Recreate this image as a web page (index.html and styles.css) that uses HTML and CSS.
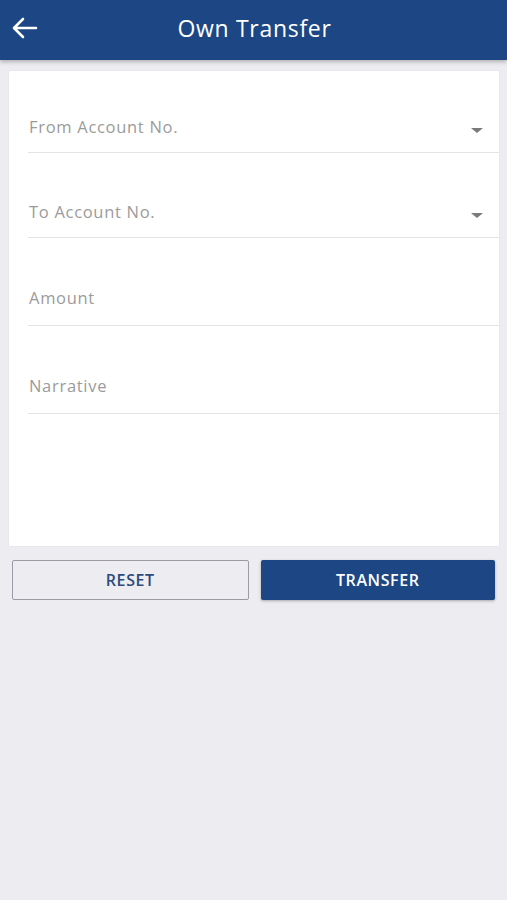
FILE: index.html
```html
<!DOCTYPE html>
<html lang="en">
  <head>
    <meta charset="UTF-8" />
    <meta name="viewport" content="width=device-width, initial-scale=1.0" />
    <title>Own Transfer</title>
    <link rel="stylesheet" href="styles.css">
  </head>
  <body>
    <div class="header">
      <div class="back">
        <svg width="26" height="22" viewBox="0 0 26 22">
          <path d="M24 11H3M11 2L2 11l9 9" fill="none" stroke="#fff" stroke-width="2.6" stroke-linecap="round" stroke-linejoin="round" />
        </svg>
      </div>
      <h1>Own Transfer</h1>
    </div>

    <div class="card">
      <div class="field select first">
        <span>From Account No.</span>
        <i class="caret"></i>
      </div>
      <div class="field select">
        <span>To Account No.</span>
        <i class="caret"></i>
      </div>
      <div class="field">
        <span>Amount</span>
      </div>
      <div class="field">
        <span>Narrative</span>
      </div>
    </div>

    <div class="buttons">
      <button class="btn reset">RESET</button>
      <button class="btn transfer">TRANSFER</button>
    </div>
  </body>
</html>
```

FILE: styles.css
```css
* {
  padding: 0;
  margin: 0;
  box-sizing: border-box;
}

body {
  background: #ededf1;
  font-family: "Open Sans", "Noto Sans", sans-serif;
  height: 900px;
}

.header {
  position: relative;
  height: 60px;
  background: #1c4784;
  display: flex;
  align-items: center;
  justify-content: center;
  box-shadow: 0 2px 4px rgba(0, 0, 0, 0.25);
}

.back {
  position: absolute;
  left: 12px;
  top: 17px;
  display: flex;
}

.header h1 {
  color: #fff;
  font-size: 23px;
  font-weight: 400;
  letter-spacing: 0.7px;
  margin-top: -5px;
  margin-left: 2px;
}

.card {
  background: #fff;
  margin: 11px 8px 0 9px;
  padding-bottom: 132px;
  box-shadow: 0 0 1px rgba(0, 0, 0, 0.12);
}

.field {
  display: flex;
  align-items: center;
  justify-content: space-between;
  margin-left: 19px;
  padding: 50px 0 17px 1px;
  border-bottom: 1px solid #e3e3e6;
  line-height: 20px;
}

.field.select {
  padding-top: 49px;
  padding-bottom: 15px;
}

.field.first {
  padding-top: 46px;
}

.field span {
  color: #9b9b9b;
  font-size: 16.5px;
  letter-spacing: 0.7px;
}

.caret {
  width: 0;
  height: 0;
  border-left: 6px solid transparent;
  border-right: 6px solid transparent;
  border-top: 5px solid #7a7a7a;
  margin: 6px 16px 0 0;
}

.buttons {
  display: flex;
  gap: 12px;
  padding: 14px 12px 0 12px;
}

.btn {
  flex: 1;
  height: 40px;
  border-radius: 2px;
  font-family: "Open Sans", "Noto Sans", sans-serif;
  font-size: 16px;
  font-weight: 600;
  letter-spacing: 0.6px;
}

.reset {
  background: transparent;
  border: 1px solid #9a9ca4;
  color: #2c4a7c;
}

.transfer {
  background: #1c4784;
  border: none;
  color: #fff;
  box-shadow: 0 1px 3px rgba(0, 0, 0, 0.3);
}
```
